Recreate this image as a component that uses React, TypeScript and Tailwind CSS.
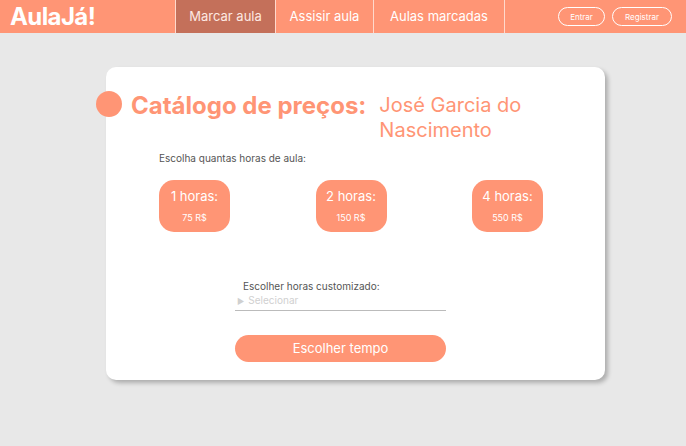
const font = { fontFamily: "Inter, 'Noto Sans', sans-serif" };

type PriceOption = { hours: number; price: string };

const options: PriceOption[] = [
  { hours: 1, price: "75 R$" },
  { hours: 2, price: "150 R$" },
  { hours: 4, price: "550 R$" },
];

function NavBar() {
  return (
    <header className="flex h-[33px] items-stretch bg-[#ff9575] text-white">
      <div className="flex w-[175px] items-center pl-[10px] text-[24px] font-bold tracking-tight">AulaJá!</div>
      <nav className="flex items-stretch border-l border-[#ffd9cc]">
        <a className="flex w-[100px] items-center justify-center border-r border-[#ffd9cc] bg-[#c4705a] text-[13px] text-[#fde9e2]">
          Marcar aula
        </a>
        <a className="flex w-[98px] items-center justify-center border-r border-[#ffd9cc] text-[13px]">Assisir aula</a>
        <a className="flex w-[131px] items-center justify-center border-r border-[#ffd9cc] text-[13px]">Aulas marcadas</a>
      </nav>
      <div className="ml-auto flex items-center gap-[7px] pr-[14px]">
        <button className="h-[19px] w-[47px] rounded-full border border-white text-[8px]">Entrar</button>
        <button className="h-[19px] w-[60px] rounded-full border border-white text-[8px]">Registrar</button>
      </div>
    </header>
  );
}

export default function App() {
  return (
    <div className="h-[446px] w-[686px] bg-[#e8e8e8]" style={font}>
      <NavBar />
      <main className="ml-[106px] mt-[34px] h-[313px] w-[499px] rounded-[10px] bg-white shadow-[3px_3px_4px_rgba(0,0,0,0.25)]">
        <div className="relative flex pt-[24px]">
          <span className="absolute left-[-10px] top-[24px] h-[26px] w-[26px] rounded-full bg-[#ff9575]" />
          <h1 className="ml-[25px] text-[24px] font-bold leading-[29px] text-[#ff9575]">Catálogo de preços:</h1>
          <p className="ml-[13px] mt-[2px] w-[160px] text-[20px] leading-[25px] text-[#ff9575]">José Garcia do Nascimento</p>
        </div>
        <p className="ml-[53px] mt-[8px] text-[10px] text-[#555]">Escolha quantas horas de aula:</p>
        <div className="ml-[53px] mt-[14px] flex w-[384px] justify-between">
          {options.map((o) => (
            <div
              key={o.hours}
              className="flex h-[52px] w-[71px] flex-col items-center rounded-[15px] bg-[#ff9575] pt-[8px] text-white"
            >
              <span className="text-[13px] leading-[17px]">{o.hours} horas:</span>
              <span className="mt-[7px] text-[9px] leading-[11px]">{o.price}</span>
            </div>
          ))}
        </div>
        <div className="ml-[129px] mt-[48px] w-[211px]">
          <p className="pl-[8px] text-[10px] leading-[13px] text-[#555]">Escolher horas customizado:</p>
          <div className="flex items-center gap-[4px] border-b border-[#bbb] pb-[2px] pl-[2px] text-[10px] text-[#d0d0d0]">
            <span className="text-[8px]">▶</span>
            <span>Selecionar</span>
          </div>
          <button className="mt-[24px] h-[27px] w-[211px] rounded-full bg-[#ff9575] text-[13px] text-white">
            Escolher tempo
          </button>
        </div>
      </main>
    </div>
  );
}
